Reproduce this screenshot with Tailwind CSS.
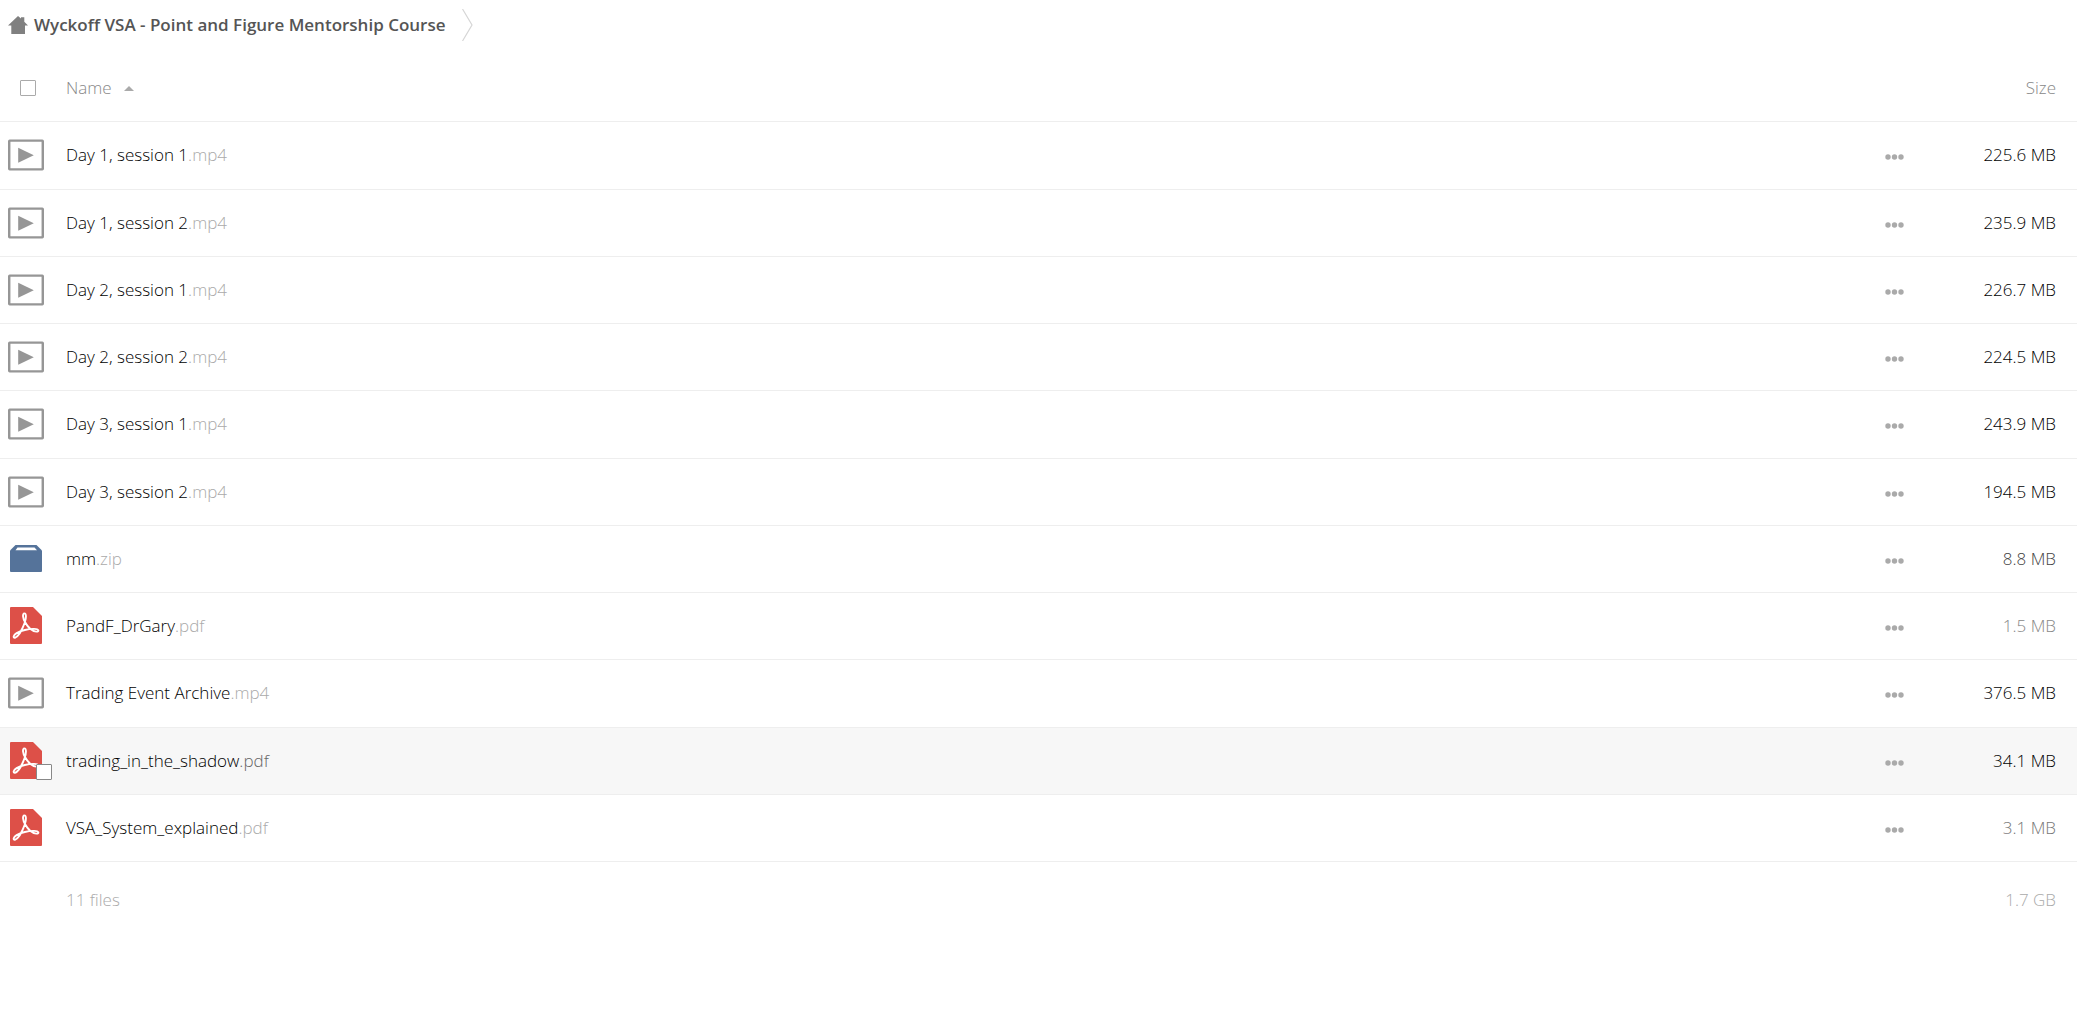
<!DOCTYPE html>
<html lang="en">

<head>
    <meta charset="UTF-8">
    <meta name="viewport" content="width=device-width, initial-scale=1.0">
    <title>Wyckoff VSA - Point and Figure Mentorship Course</title>
    <script src="https://cdn.jsdelivr.net/npm/@tailwindcss/browser@4"></script>
</head>

<body class="bg-white text-black font-['Open_Sans',sans-serif] font-light text-[17px] leading-6">
    <!-- Icons -->
    <svg class="hidden">
        <symbol id="icon-video" viewBox="0 0 37 32">
            <rect x="1.25" y="1.25" width="34.5" height="29.5" rx="0.5" fill="none" stroke="#969696" stroke-width="2.5" />
            <path d="M10.5 8.5v15.5L26.5 16.2z" fill="#969696" />
        </symbol>
        <symbol id="icon-zip" viewBox="0 0 32 27">
            <path d="M5.5 0h21L32 5.5V26a1 1 0 0 1-1 1H1a1 1 0 0 1-1-1V5.5z" fill="#55739a" />
            <path d="M7.5 2.5h17L27 5.3H5.5z" fill="#fff" />
        </symbol>
        <symbol id="icon-pdf" viewBox="0 0 32 37">
            <path d="M1 0h22l9 9v27a1 1 0 0 1-1 1H1a1 1 0 0 1-1-1V1a1 1 0 0 1 1-1z" fill="#dd5048" />
            <path d="M15.3 15.5C12.6 11.5 12.3 6.4 14.4 6.4c2 0 2 4.6.3 9.4C12.5 22 8.3 30 5 30.7c-2.3.3-1.6-2.6 1.6-4.6 4-2.5 12-4.4 17.5-4.2 5.3.2 5.2 2.6 2.5 2.7-4 .2-8.6-4-11.3-9.1z"
                fill="none" stroke="#fff" stroke-width="1.9" stroke-linejoin="round" />
        </symbol>
        <symbol id="icon-dots" viewBox="0 0 19 6">
            <circle cx="3" cy="3" r="2.7" />
            <circle cx="9.5" cy="3" r="2.7" />
            <circle cx="16" cy="3" r="2.7" />
        </symbol>
    </svg>

    <nav class="flex items-center h-[50px] pl-2" aria-label="Breadcrumb">
        <a href="#" class="flex items-center gap-1.5 text-[#555] font-semibold">
            <svg class="w-5 h-[18px] fill-[#808080]" viewBox="0 0 20 18">
                <path d="M10 0l3 2.6V1.2h3.3v4.5L20 9.5h-3V18H3.3V9.5H0z" />
            </svg>
            <span>Wyckoff VSA - Point and Figure Mentorship Course</span>
        </a>
        <svg class="w-[11px] h-8 ml-4" viewBox="0 0 11 32" fill="none" stroke="#d6d6d6" stroke-width="1.2">
            <path d="M.5 0L10 16L.5 32" />
        </svg>
    </nav>

    <table class="w-full table-fixed border-collapse">
        <colgroup>
            <col class="w-[66px]">
            <col>
            <col class="w-[60px]">
            <col class="w-[154px]">
        </colgroup>
        <thead class="text-[#888]">
            <tr class="h-[71px] border-b border-[#eee]">
                <th class="pl-5 pt-1.5 text-left">
                    <input type="checkbox" id="select-all" aria-label="Select all"
                        class="block appearance-none size-4 bg-white border border-[#aaa] rounded-[1px]">
                </th>
                <th class="pt-1.5 text-left font-light">
                    <button type="button" class="flex items-center gap-3">
                        Name
                        <svg class="w-[10px] h-[5px] fill-[#aaa]" viewBox="0 0 10 5">
                            <path d="M0 5L5 0l5 5z" />
                        </svg>
                    </button>
                </th>
                <th></th>
                <th class="pt-1.5 pr-[21px] text-right font-light">
                    <button type="button">Size</button>
                </th>
            </tr>
        </thead>
        <tbody id="file-list"></tbody>
        <tfoot class="text-[#aaa]">
            <tr class="h-[78px]">
                <td></td>
                <td>11 files</td>
                <td></td>
                <td class="pr-[21px] text-right">1.7 GB</td>
            </tr>
        </tfoot>
    </table>

    <script>
        const files = [
            { name: 'Day 1, session 1', ext: '.mp4', type: 'video', size: '225.6 MB', shade: 'text-black' },
            { name: 'Day 1, session 2', ext: '.mp4', type: 'video', size: '235.9 MB', shade: 'text-black' },
            { name: 'Day 2, session 1', ext: '.mp4', type: 'video', size: '226.7 MB', shade: 'text-black' },
            { name: 'Day 2, session 2', ext: '.mp4', type: 'video', size: '224.5 MB', shade: 'text-black' },
            { name: 'Day 3, session 1', ext: '.mp4', type: 'video', size: '243.9 MB', shade: 'text-black' },
            { name: 'Day 3, session 2', ext: '.mp4', type: 'video', size: '194.5 MB', shade: 'text-black' },
            { name: 'mm', ext: '.zip', type: 'zip', size: '8.8 MB', shade: 'text-[#444]' },
            { name: 'PandF_DrGary', ext: '.pdf', type: 'pdf', size: '1.5 MB', shade: 'text-[#888]' },
            { name: 'Trading Event Archive', ext: '.mp4', type: 'video', size: '376.5 MB', shade: 'text-black' },
            { name: 'trading_in_the_shadow', ext: '.pdf', type: 'pdf', size: '34.1 MB', shade: 'text-black', active: true },
            { name: 'VSA_System_explained', ext: '.pdf', type: 'pdf', size: '3.1 MB', shade: 'text-[#777]' }
        ];

        const iconSizes = {
            video: 'w-9 h-8',
            zip: 'w-8 h-[27px]',
            pdf: 'w-8 h-[37px]'
        };

        document.getElementById('file-list').innerHTML = files.map(file => `
            <tr class="h-[67px] nth-[4n+1]:h-[68px] border-b border-[#eee] ${file.active ? 'bg-[#f7f7f7]' : 'bg-white'}">
                <td>
                    <div class="relative flex justify-center w-9 ml-2">
                        <svg class="shrink-0 ${iconSizes[file.type]}"><use href="#icon-${file.type}" /></svg>
                        ${file.active ? `<input type="checkbox" aria-label="Select ${file.name}"
                            class="absolute -right-2 -bottom-px appearance-none size-4 bg-white border border-[#888] rounded-[1px]">` : ''}
                    </div>
                </td>
                <td>
                    <a href="#">${file.name}<span class="${file.active ? 'text-[#666]' : 'text-[#aaa]'}">${file.ext}</span></a>
                </td>
                <td>
                    <button type="button" aria-label="Actions" class="block pt-1 ml-[22px]">
                        <svg class="w-[19px] h-1.5 fill-[#aaa]"><use href="#icon-dots" /></svg>
                    </button>
                </td>
                <td class="pr-[21px] text-right ${file.shade}">${file.size}</td>
            </tr>
        `).join('');
    </script>
</body>

</html>
